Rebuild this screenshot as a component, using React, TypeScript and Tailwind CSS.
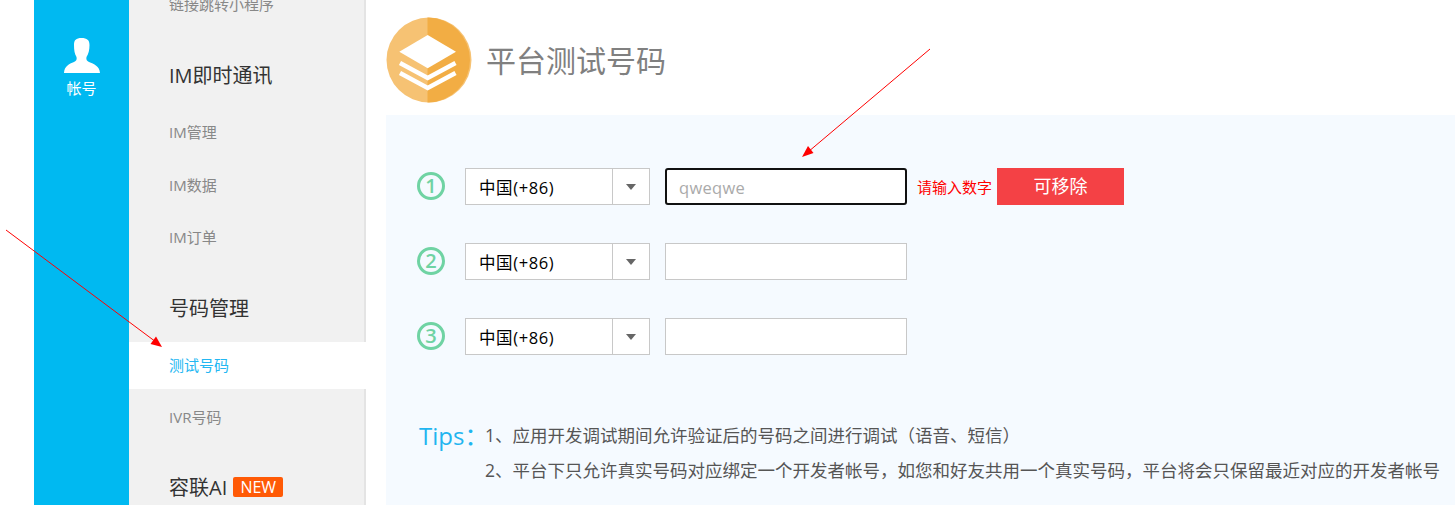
const FONT = "font-['Open_Sans','Noto_Sans_CJK_SC',sans-serif]";

function NavHeading({ children, className }: { children: React.ReactNode; className: string }) {
  return (
    <div className={`flex h-10 items-center pt-[2px] pl-10 text-[20px] text-[#333] ${className}`}>
      {children}
    </div>
  );
}

function NavItem({ label, className, active }: { label: string; className: string; active?: boolean }) {
  return (
    <div
      className={`flex h-[47px] items-center pl-10 text-[15px] ${className} ${
        active ? "bg-white text-[#23b7f2]" : "text-[#888]"
      }`}
    >
      {label}
    </div>
  );
}

function Sidebar() {
  return (
    <aside className="relative h-full w-[237px] shrink-0 overflow-hidden bg-[#f1f1f1] shadow-[inset_-2px_0_0_#e4e4e4]">
      <div className="-mt-[19px] flex flex-col">
        <NavItem label="链接跳转小程序" className="" />
        <NavHeading className="mt-[27px]">IM即时通讯</NavHeading>
        <NavItem label="IM管理" className="mt-[14px]" />
        <NavItem label="IM数据" className="mt-[6px]" />
        <NavItem label="IM订单" className="mt-[5px]" />
        <NavHeading className="mt-[27px]">号码管理</NavHeading>
        <NavItem label="测试号码" className="mt-[14px]" active />
        <NavItem label="IVR号码" className="mt-[5px]" />
        <NavHeading className="mt-[26px]">
          容联AI
          <span className="-mt-[2px] ml-[6px] flex h-5 w-[50px] items-center justify-center rounded-[2px] bg-[#ff5a06] text-[16px] font-medium text-white">
            NEW
          </span>
        </NavHeading>
      </div>
    </aside>
  );
}

function Logo() {
  return (
    <svg width="86" height="86" viewBox="0 0 86 86" className="shrink-0">
      <circle cx="43" cy="43" r="42.5" fill="#f6c273" />
      <path d="M41.5 .5 A42.5 42.5 0 0 1 41.5 85.5 Z" fill="#f2ad44" />
      <path d="M41.7 18 L70 34.7 L41.7 51.3 L13.3 34.7 Z" fill="#fff" />
      <path d="M14 46 L41.7 61 L69.5 46" fill="none" stroke="#fff" strokeWidth="4.5" />
      <path d="M14 56 L41.7 71 L69.5 56" fill="none" stroke="#fff" strokeWidth="4.5" />
    </svg>
  );
}

function PhoneRow({ n, error }: { n: number; error?: boolean }) {
  return (
    <div className="mb-[38px] flex h-[37px] items-center">
      <span className="-mt-[2px] ml-[31px] flex h-7 w-7 shrink-0 items-center justify-center rounded-full border-[3px] border-[#6fd3a3] text-[20px] leading-none font-semibold text-[#6fd3a3]">
        {n}
      </span>
      <div className="ml-5 flex h-full w-[185px] border border-[#c8c8c8] bg-white">
        <div className="flex flex-1 items-center border-r border-[#c8c8c8] pt-[3px] pl-[13px] text-[16.5px] tracking-[0.6px] text-black">
          中国(+86)
        </div>
        <div className="flex w-[36px] items-center justify-center">
          <span className="h-0 w-0 border-x-[5px] border-t-[6px] border-x-transparent border-t-[#666]" />
        </div>
      </div>
      {error ? (
        <>
          <input
            readOnly
            defaultValue="qweqwe"
            className="ml-[15px] h-full w-[242px] rounded-[3px] border-2 border-[#111] bg-white pt-px pl-3 text-[16.5px] tracking-[0.3px] text-[#aaa] outline-none"
          />
          <span className="ml-[10px] w-[80px] pt-px text-[15px] whitespace-nowrap text-[#f00]">请输入数字</span>
          <button className="flex h-full w-[127px] items-center justify-center bg-[#f44145] text-[18px] text-white">
            可移除
          </button>
        </>
      ) : (
        <div className="ml-[15px] h-full w-[242px] border border-[#c8c8c8] bg-white" />
      )}
    </div>
  );
}

function Arrows() {
  return (
    <svg width="1455" height="505" className="pointer-events-none absolute top-0 left-0">
      <line x1="930" y1="49" x2="808" y2="152" stroke="#f00" strokeWidth="1" />
      <path d="M802 157 L808 146 L813.5 153 Z" fill="#f00" />
      <line x1="6" y1="230" x2="156" y2="342" stroke="#f00" strokeWidth="1" />
      <path d="M162 347 L150.5 344 L156 336.5 Z" fill="#f00" />
    </svg>
  );
}

export default function App() {
  return (
    <div className={`relative flex h-[505px] w-[1455px] overflow-hidden bg-white pl-[34px] ${FONT}`}>
      <nav className="flex h-full w-[95px] shrink-0 flex-col items-center bg-[#00b9f1] pt-[37px] text-white">
        <svg width="37" height="37" viewBox="0 0 37 37" fill="#fff">
          <path d="M11 8 C11 3 13 1 18.5 1 C24 1 26.5 3 26.5 8 C26.5 13 25.5 17 23.5 20 C23 22 23.5 24 26 25 C31 27 36.5 29 37 36 L1 36 C1.5 29 6 27 11 25 C13.5 24 14 22 13.5 20 C11.5 17 11 13 11 8 Z" />
        </svg>
        <span className="mt-[4px] text-[15px] leading-5">帐号</span>
      </nav>
      <Sidebar />
      <main className="flex min-w-0 flex-1 flex-col pl-5">
        <header className="flex h-[115px] shrink-0 items-center pt-[5px]">
          <Logo />
          <h1 className="ml-[14px] text-[30px] font-normal text-[#808080]">平台测试号码</h1>
        </header>
        <section className="flex-1 bg-[#f5faff] pt-[53px]">
          <PhoneRow n={1} error />
          <PhoneRow n={2} />
          <PhoneRow n={3} />
          <div className="mt-[63px] flex pl-[33px] text-[17.5px] leading-[35px] whitespace-nowrap text-[#555]">
            <span className="w-[66px] shrink-0 text-[24px] text-[#1fb5f0]">Tips：</span>
            <div>
              <p>1、应用开发调试期间允许验证后的号码之间进行调试（语音、短信）</p>
              <p>2、平台下只允许真实号码对应绑定一个开发者帐号，如您和好友共用一个真实号码，平台将会只保留最近对应的开发者帐号</p>
            </div>
          </div>
        </section>
      </main>
      <Arrows />
    </div>
  );
}
